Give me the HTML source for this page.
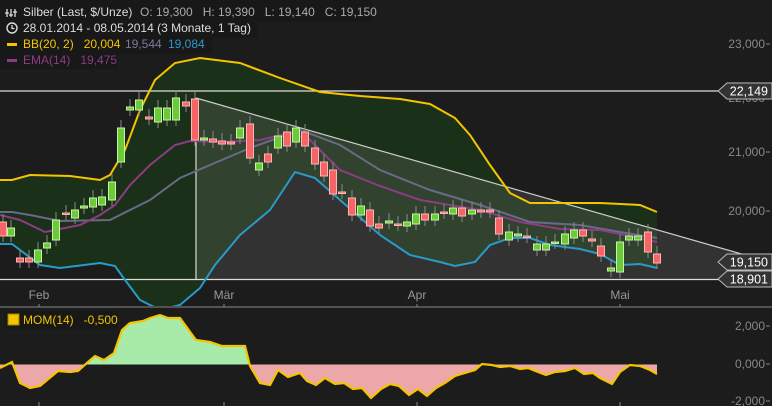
<!DOCTYPE html>
<html><head><meta charset="utf-8"><style>
html,body{margin:0;padding:0;background:#1c1c1c;width:772px;height:406px;overflow:hidden}
svg{display:block;font-family:"Liberation Sans",sans-serif}
text{white-space:pre}
</style></head><body>
<svg id="s" width="772" height="406" viewBox="0 0 772 406" xmlns="http://www.w3.org/2000/svg">
<rect width="772" height="406" fill="#1c1c1c"/>
<defs><clipPath id="cp"><rect x="0" y="0" width="772" height="306"/></clipPath></defs>
<g id="price" clip-path="url(#cp)"></g>
<g id="mom"></g>
<g id="txt"></g>
</svg>
<script>
const NS="http://www.w3.org/2000/svg";
function el(p,t,a,txt){const e=document.createElementNS(NS,t);for(const k in a)e.setAttribute(k,a[k]);if(txt!=null){e.setAttributeNS("http://www.w3.org/XML/1998/namespace","xml:space","preserve");e.textContent=txt;}p.appendChild(e);return e;}
function pstr(pts){return pts.map(p=>p[0]+","+p[1]).join(" ");}
const up=[[0,180],[12,180],[30,175],[70,176],[100,180],[110,175],[125,150],[140,110],[155,80],[175,63],[200,58],[240,63],[280,78],[320,92],[360,96],[400,99],[430,104],[455,118],[470,135],[490,165],[510,193],[530,203],[560,203],[600,203],[640,205],[657,212]];
const lo=[[0,244],[12,244],[40,265],[60,268],[100,263],[115,266],[125,280],[140,300],[160,310],[180,305],[200,288],[215,265],[240,235],[270,210],[295,172],[315,178],[340,200],[380,235],[410,255],[440,262],[455,266],[475,262],[490,245],[510,238],[530,238],[550,245],[580,249],[600,254],[620,265],[640,264],[657,268]];
const mid=[[0,212],[12,212],[30,215],[60,221],[110,220],[150,200],[180,178],[210,165],[250,148],[300,130],[340,145],[380,170],[430,190],[480,205],[530,222],[580,225],[620,232],[657,238]];
const ema=[[0,215],[20,220],[45,232],[80,225],[100,215],[115,205],[130,185],[150,165],[175,145],[190,141],[220,142],[260,140],[290,133],[310,140],[340,170],[380,186],[420,200],[480,210],[520,222],[560,229],[600,230],[630,236],[657,242]];
const g=document.getElementById("price");
el(g,"polygon",{points:pstr(up.concat(lo.slice().reverse())),fill:"#1b3019"});
el(g,"polygon",{points:"196,98 745,255 745,279 196,279",fill:"rgba(200,200,200,0.13)"});
el(g,"line",{x1:196,y1:98,x2:745,y2:255,stroke:"#ccc","stroke-width":1.2});
el(g,"line",{x1:196,y1:98,x2:196,y2:280,stroke:"#ddd","stroke-width":1.2});
el(g,"line",{x1:0,y1:91,x2:722,y2:91,stroke:"#ddd","stroke-width":1.2});
el(g,"line",{x1:0,y1:279.5,x2:722,y2:279.5,stroke:"#ddd","stroke-width":1.2});
el(g,"polyline",{points:pstr(mid),fill:"none",stroke:"#6a6a88","stroke-width":2});
el(g,"polyline",{points:pstr(ema),fill:"none",stroke:"#8c3c84","stroke-width":2});
el(g,"polyline",{points:pstr(up),fill:"none",stroke:"#f5c400","stroke-width":2});
el(g,"polyline",{points:pstr(lo),fill:"none",stroke:"#2a9ac8","stroke-width":2});
const c=[[3,'r',222,236],[11,'g',228,236],[20,'r',258,262],[29,'r',258,262],[38,'g',250,262],[47,'g',243,248],[56,'g',220,240],[66,'r',213,214],[75,'g',210,218],[84,'g',206,208],[93,'g',198,207],[102,'g',197,205],[112,'g',182,200],[121,'g',128,162],[130,'g',107,110],[139,'g',100,110],[149,'r',117,119],[158,'g',108,122],[167,'g',108,120],[176,'g',98,120],[186,'r',102,106],[195,'r',99,140],[204,'g',138,140],[213,'r',139,142],[222,'r',141,144],[231,'r',142,144],[240,'g',128,138],[250,'r',124,158],[259,'g',163,170],[268,'r',154,162],[278,'g',136,148],[287,'r',132,146],[296,'g',128,142],[305,'r',132,146],[315,'r',148,164],[324,'r',162,176],[333,'r',170,194],[342,'r',192,193],[352,'r',198,215],[361,'g',206,215],[370,'r',210,226],[379,'r',224,228],[389,'g',221,223],[398,'r',224,225],[407,'g',222,226],[416,'g',214,224],[425,'r',214,220],[435,'g',214,220],[444,'r',212,213],[453,'g',208,214],[462,'r',208,216],[472,'g',210,214],[481,'r',210,212],[490,'r',210,212],[499,'r',218,234],[509,'g',232,240],[518,'g',234,236],[527,'r',236,237],[537,'g',244,250],[546,'g',244,250],[555,'g',242,243],[565,'g',234,244],[574,'g',230,238],[583,'r',230,236],[592,'r',239,241],[601,'r',246,256],[611,'g',268,271],[620,'g',242,272],[629,'g',236,240],[638,'g',236,240],[648,'r',232,252],[657,'r',254,263]];
c.forEach(([x,t,a,b])=>{
 el(g,"line",{x1:x,y1:a-8,x2:x,y2:b+6,stroke:"#888","stroke-width":1});
 const h=Math.max(b-a,1.5);
 el(g,"rect",{x:x-3.5,y:a,width:7,height:h,fill:t=='g'?'#6cc93a':'#f56565',stroke:t=='g'?'#c4f5a0':'#ffb5b5','stroke-width':1});
});
const m=document.getElementById("mom");
const Z=364.5;
const mp=[[0,368],[12,362],[20,383],[30,388],[40,386],[58,371],[70,372],[78,371],[88,362],[95,356],[104,360],[114,353],[122,330],[130,323],[143,321],[150,318],[160,315],[168,318],[180,318],[196,340],[210,342],[222,346],[245,346],[250,366],[260,383],[270,385],[278,370],[288,377],[300,373],[307,381],[316,385],[325,378],[335,384],[344,383],[353,389],[362,388],[371,398],[381,389],[390,384],[399,386],[409,395],[418,389],[427,396],[436,388],[445,383],[455,376],[465,373],[475,370],[482,364],[492,365],[500,367],[510,366],[520,369],[528,368],[538,372],[546,375],[555,372],[565,371],[575,368],[584,374],[593,373],[600,378],[612,384],[620,372],[630,365],[640,366],[650,370],[657,374]];
el(m,"defs",{}).innerHTML='<clipPath id="ab"><rect x="0" y="300" width="772" height="'+(Z-300)+'"/></clipPath><clipPath id="be"><rect x="0" y="'+Z+'" width="772" height="50"/></clipPath>';
const poly=pstr([[0,Z]].concat(mp).concat([[657,Z]]));
el(m,"polygon",{points:poly,fill:"#a8eba8","clip-path":"url(#ab)"});
el(m,"polygon",{points:poly,fill:"#eca8a8","clip-path":"url(#be)"});
el(m,"polyline",{points:pstr(mp),fill:"none",stroke:"#f5c400","stroke-width":2.2});
const T=document.getElementById("txt");
el(T,"line",{x1:0,y1:307,x2:772,y2:307,stroke:"#888","stroke-width":1});
[[39,"Feb"],[224,"Mär"],[417,"Apr"],[620,"Mai"]].forEach(([x,s])=>{
 el(T,"text",{x:x,y:299,fill:"#999","font-size":12,"text-anchor":"middle"},s);
 el(T,"line",{x1:x,y1:304,x2:x,y2:307,stroke:"#888"});
 el(T,"line",{x1:x,y1:402,x2:x,y2:406,stroke:"#888"});
});
[[48,"23,000"],[102,"22,000"],[156,"21,000"],[215,"20,000"],[330,"2,000"],[368,"0,000"],[405,"-2,000"]].forEach(([y,s])=>{
 el(T,"text",{x:765,y:y,fill:"#888","font-size":12,"text-anchor":"end"},s);
 el(T,"line",{x1:766,y1:y-4,x2:770,y2:y-4,stroke:"#888"});
});
function lab(y,s){
 el(T,"polygon",{points:`718,${y} 727,${y-8} 772,${y-8} 772,${y+8} 727,${y+8}`,fill:"#333",stroke:"#bbb","stroke-width":1});
 el(T,"text",{x:768,y:y+4.5,fill:"#fff","font-size":12.5,"text-anchor":"end"},s);
}
lab(91,"22,149");lab(262,"19,150");lab(279,"18,901");
el(T,"rect",{x:0,y:0,width:372,height:22,fill:"#181818"});
el(T,"rect",{x:0,y:19,width:258,height:19,fill:"#181818"});
el(T,"rect",{x:0,y:36,width:212,height:18,fill:"#181818"});
el(T,"rect",{x:0,y:52,width:118,height:17,fill:"#181818"});
el(T,"path",{d:"M7,9v8M11,9v8M15,9v8M5,13h4M9,15h4M13,12h4",stroke:"#ddd","stroke-width":1.3,fill:"none"});
el(T,"text",{x:23,y:16,fill:"#ddd","font-size":12},"Silber (Last, $/Unze)");
el(T,"text",{x:140,y:16,fill:"#aaa","font-size":12},"O: 19,300   H: 19,390   L: 19,140   C: 19,150");
el(T,"circle",{cx:12,cy:28,r:5,fill:"none",stroke:"#ddd","stroke-width":1.4});
el(T,"path",{d:"M12,25v3.5h2.5",stroke:"#ddd","stroke-width":1.3,fill:"none"});
el(T,"text",{x:23,y:32,fill:"#ddd","font-size":12},"28.01.2014 - 08.05.2014 (3 Monate, 1 Tag)");
el(T,"rect",{x:7,y:43,width:10,height:3,fill:"#f5c400"});
el(T,"text",{x:23,y:48,fill:"#f5c400","font-size":12},"BB(20, 2)   20,004");
el(T,"text",{x:125,y:48,fill:"#7a7a9a","font-size":12},"19,544");
el(T,"text",{x:168,y:48,fill:"#2a9ac8","font-size":12},"19,084");
el(T,"rect",{x:7,y:59,width:10,height:3,fill:"#8c3c84"});
el(T,"text",{x:23,y:64,fill:"#8c3c84","font-size":12},"EMA(14)   19,475");
el(T,"rect",{x:4,y:311,width:114,height:18,fill:"#181818"});
el(T,"rect",{x:8,y:314,width:11,height:11,fill:"#f5c400",stroke:"#a08000"});
el(T,"text",{x:23,y:324,fill:"#f5c400","font-size":12},"MOM(14)   -0,500");
</script>
</body></html>
